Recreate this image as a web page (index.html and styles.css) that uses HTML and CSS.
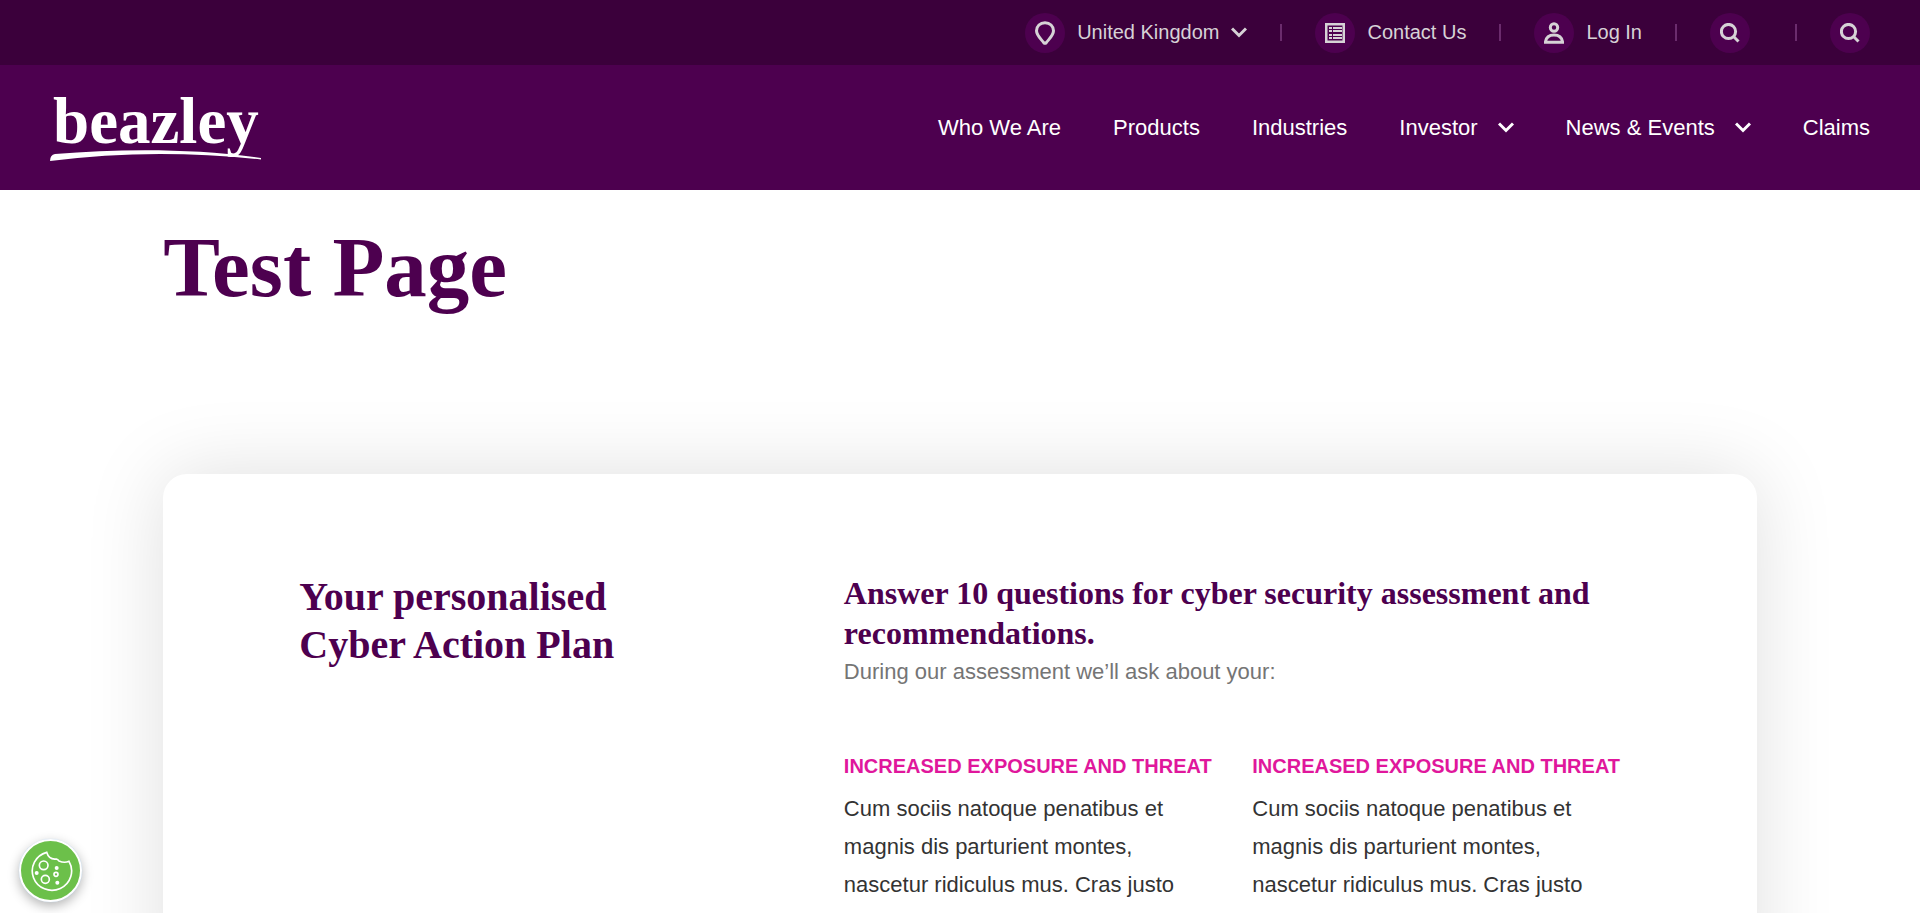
FILE: index.html
```html
<!DOCTYPE html>
<html lang="en-GB">
<head>
<meta charset="utf-8">
<meta name="viewport" content="width=device-width, initial-scale=1">
<title>Test Page | Beazley</title>
<link rel="stylesheet" href="styles.css">
</head>
<body>
<header>
  <div class="topbar">
    <button class="tool" type="button">
      <span class="disc"><svg width="20" height="24" viewBox="0 0 20 24"><path d="M10 1.7c4.900 0 8.500 3.500 8.500 8.100 0 4.600-4.500 8.200-7.200 11.800q-1.300 1.300-2.600 0C6 18 1.500 14.400 1.500 9.800 1.500 5.200 5.100 1.700 10 1.700z"/></svg></span>
      <span class="tool-label">United Kingdom</span>
      <svg class="tool-chevron" width="16" height="11" viewBox="0 0 16 11"><path d="M1 1.500l7 7 7-7"/></svg>
    </button>
    <span class="divider"></span>
    <a class="tool" href="#contact">
      <span class="disc"><svg width="20" height="20" viewBox="0 0 20 20"><path d="M1 1h18v18H1z"/><path class="thin" d="M4 5h3M8 5h9M4 8h3M8 8h9M4 12h3M8 12h9M4 15h3M8 15h9"/></svg></span>
      <span class="tool-label">Contact Us</span>
    </a>
    <span class="divider"></span>
    <a class="tool" href="#login">
      <span class="disc"><svg width="20" height="22" viewBox="0 0 20 22"><circle cx="10" cy="5.500" r="3.700"/><path d="M1.400 20.300c.6-5 4-7.300 8.600-7.300s8 2.300 8.600 7.300z"/></svg></span>
      <span class="tool-label">Log In</span>
    </a>
    <span class="divider"></span>
    <button class="tool" type="button" aria-label="Search">
      <span class="disc"><svg width="20" height="20" viewBox="0 0 20 20"><circle cx="8.500" cy="8.500" r="7.100"/><path d="M13.300 13.300l5.200 5.200"/></svg></span>
      <span class="tool-label"></span>
    </button>
    <span class="divider"></span>
    <button class="tool" type="button" aria-label="Search site">
      <span class="disc"><svg width="20" height="20" viewBox="0 0 20 20"><circle cx="8.500" cy="8.500" r="7.100"/><path d="M13.300 13.300l5.200 5.200"/></svg></span>
    </button>
  </div>
  <div class="mainbar">
    <a class="logo" href="#home" aria-label="Beazley home">
      <svg width="212" height="92" viewBox="0 -12 212 92"><text x="3" y="49">beazley</text><path d="M0 67q0-6 5-7C70 55 140 54 211 64v1.500C140 58 70 58 0 67z"/></svg>
    </a>
    <nav class="nav" aria-label="Main">
      <a href="#who">Who We Are</a>
      <a href="#products">Products</a>
      <a href="#industries">Industries</a>
      <a href="#investor">Investor<svg width="16" height="11" viewBox="0 0 16 11"><path d="M1 1.500l7 7 7-7"/></svg></a>
      <a href="#news">News &amp; Events<svg width="16" height="11" viewBox="0 0 16 11"><path d="M1 1.500l7 7 7-7"/></svg></a>
      <a href="#claims">Claims</a>
    </nav>
  </div>
</header>
<main class="page">
  <h1>Test Page</h1>
  <section class="card">
    <h2>Your personalised<br>Cyber Action Plan</h2>
    <div class="intro">
      <h3>Answer 10 questions for cyber security assessment and recommendations.</h3>
      <p class="lead">During our assessment we’ll ask about your:</p>
      <div class="topics">
        <article>
          <h4>INCREASED EXPOSURE AND THREAT</h4>
          <p>Cum sociis natoque penatibus et magnis dis parturient montes, nascetur ridiculus mus. Cras justo</p>
        </article>
        <article>
          <h4>INCREASED EXPOSURE AND THREAT</h4>
          <p>Cum sociis natoque penatibus et magnis dis parturient montes, nascetur ridiculus mus. Cras justo</p>
        </article>
      </div>
    </div>
  </section>
</main>
<button class="cookies" type="button" aria-label="Cookie settings">
  <svg width="44" height="44" viewBox="88 115 132 132"><path d="M143 125A59 58 0 1 0 210 152Q196 158 180 151Q178 147 172 145Q150 148 143 125z" transform="translate(-2 0)"/><circle cx="132" cy="164" r="13"/><circle cx="137" cy="206" r="12"/><circle cx="169" cy="191" r="6"/><g class="chips"><circle cx="171" cy="172" r="6"/><circle cx="111" cy="187" r="6"/><circle cx="173" cy="216" r="6"/></g></svg>
</button>
</body>
</html>
```
FILE: styles.css
```css
* {
  box-sizing: border-box;
}

body {
  margin: 0;
  background: #fff;
  color: #333;
  font-family: "Liberation Sans", Arial, sans-serif;
  font-size: 22px;
}

h1, h2, h3, h4, p {
  margin: 0;
}

a {
  color: inherit;
  text-decoration: none;
}

button {
  border: 0;
  padding: 0;
  background: none;
  color: inherit;
  font: inherit;
  cursor: pointer;
}

svg {
  display: block;
  flex: none;
}

.topbar {
  display: flex;
  align-items: center;
  justify-content: flex-end;
  gap: 33px;
  height: 65px;
  padding: 0 50px;
  background: #3b003b;
  color: #d6d2d6;
  font-size: 20px;
}

.tool {
  display: flex;
  align-items: center;
}

.disc {
  display: flex;
  align-items: center;
  justify-content: center;
  width: 40px;
  height: 40px;
  border-radius: 50%;
  background: #4d004f;
}

.disc svg,
.tool-chevron,
.nav svg {
  fill: none;
  stroke: currentColor;
  stroke-width: 3;
}

.disc .thin {
  stroke-width: 2;
}

.tool-label {
  margin-left: 12px;
}

.tool-chevron {
  margin-left: 12px;
}

.divider {
  width: 2px;
  height: 17px;
  background: #6b2c6d;
}

.mainbar {
  display: flex;
  align-items: center;
  justify-content: space-between;
  height: 125px;
  padding: 0 50px;
  background: #4d004f;
  color: #fff;
}

.logo text {
  fill: #fff;
  font-family: "Liberation Serif", "Times New Roman", serif;
  font-size: 65px;
  font-weight: 700;
}

.logo path {
  fill: #fff;
}

.nav {
  display: flex;
  gap: 52px;
}

.nav a {
  display: flex;
  align-items: center;
  gap: 20px;
}

.page {
  padding: 30px 8.5% 100px;
}

h1, h2, h3 {
  color: #4d004f;
  font-family: "Liberation Serif", "Times New Roman", serif;
  font-weight: 700;
}

h1 {
  font-size: 85px;
  line-height: 94px;
}

.card {
  display: grid;
  grid-template-columns: repeat(12, 1fr);
  column-gap: 40px;
  margin-top: 160px;
  padding: 99px 0 100px;
  border-radius: 24px;
  background: #fff;
  box-shadow: 0 0 80px rgba(0, 0, 0, 0.13);
}

h2 {
  grid-column: 2 / 6;
  font-size: 40px;
  line-height: 48px;
}

.intro {
  grid-column: 6 / 12;
}

h3 {
  font-size: 32px;
  line-height: 40px;
}

.lead {
  color: #757575;
  line-height: 38px;
}

.topics {
  display: grid;
  grid-template-columns: 1fr 1fr;
  gap: 40px;
  margin-top: 60px;
  line-height: 38px;
}

h4 {
  margin-bottom: 9px;
  color: #e0179c;
  font-size: 20px;
  line-height: 30px;
  white-space: nowrap;
}

.cookies {
  position: fixed;
  bottom: 11px;
  left: 19px;
  display: flex;
  align-items: center;
  justify-content: center;
  width: 63px;
  height: 63px;
  border: 2px solid #fff;
  border-radius: 50%;
  background: #6cc04a;
  box-shadow: 0 0 1px #a9cdf0, 0 4px 12px rgba(0, 0, 0, 0.3);
}

.cookies svg {
  fill: none;
  stroke: #fff;
  stroke-width: 5;
}

.cookies .chips {
  fill: #fff;
  stroke: none;
}
```
